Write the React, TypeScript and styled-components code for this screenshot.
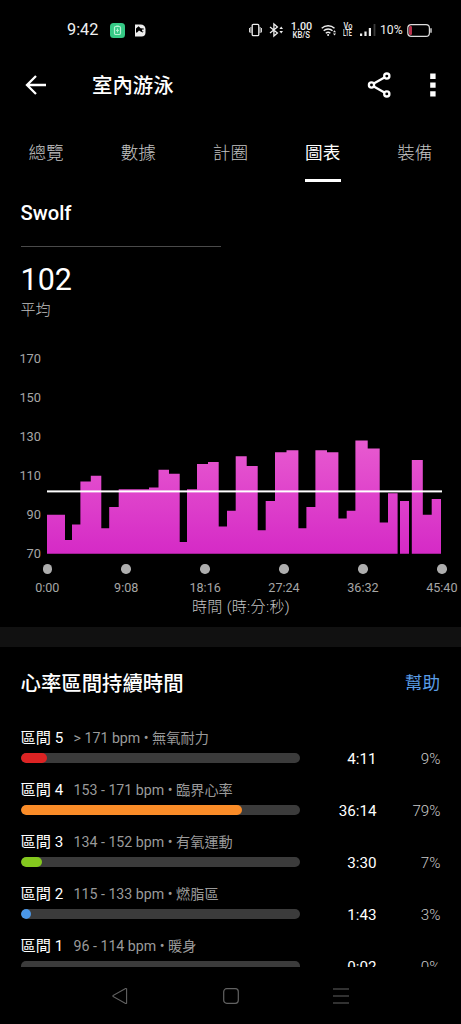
import React from 'react';
import styled, { createGlobalStyle } from 'styled-components';

const GlobalStyle = createGlobalStyle`
  *, *::before, *::after { box-sizing: border-box; }
  body {
    margin: 0;
    background: #000;
    color: #fff;
    font-family: Roboto, "Noto Sans CJK TC", sans-serif;
  }
`;

const Screen = styled.div`
  width: 461px;
  height: 1024px;
  display: flex;
  flex-direction: column;
  background: #000;
  overflow: hidden;
`;

const StatusBar = styled.header`
  flex: none;
  height: 60px;
  padding: 0 29px 0 67px;
  display: flex;
  align-items: center;
  justify-content: space-between;
`;

const StatusGroup = styled.div`
  display: flex;
  align-items: center;
`;

const StatusIcon = styled.svg<{ $ml?: number }>`
  flex: none;
  display: block;
  overflow: visible;
  margin-left: ${p => p.$ml ?? 0}px;
`;

const Clock = styled.span`
  width: 32px;
  font-size: 16.3px;
  line-height: 20px;
  color: #f0f0f0;
  white-space: nowrap;
`;

const Stacked = styled.span<{ $w: number; $ml: number }>`
  width: ${p => p.$w}px;
  margin-left: ${p => p.$ml}px;
  display: flex;
  flex-direction: column;
  align-items: center;
  font-weight: 500;
  white-space: nowrap;
  color: #eee;
`;

const StackedLine = styled.span<{ $size: number; $h: number; $squeeze?: number }>`
  font-size: ${p => p.$size}px;
  line-height: ${p => p.$h}px;
  transform: scaleX(${p => p.$squeeze ?? 1});
`;

const BatteryText = styled.span`
  width: 23px;
  margin-left: 4px;
  font-size: 12.2px;
  line-height: 16px;
  color: #eee;
`;

const AppBar = styled.div`
  flex: none;
  height: 50px;
  padding: 0 23px 0 24px;
  display: flex;
  align-items: center;
`;

const AppTitle = styled.h1`
  flex: 1;
  margin: 2px 0 0 44px;
  font-size: 20.4px;
  line-height: 28px;
  font-weight: 500;
`;

const IconButton = styled.button`
  flex: none;
  padding: 0;
  border: 0;
  background: none;
  color: #fff;
  display: flex;
`;

const Tabs = styled.nav`
  flex: none;
  height: 72px;
  display: grid;
  grid-template-columns: repeat(5, 92.2px);
`;

const Tab = styled.a<{ $active?: boolean }>`
  display: flex;
  flex-direction: column;
  align-items: center;
  justify-content: space-between;
  padding-top: 31px;
  font-size: 17.6px;
  line-height: 24px;
  font-weight: ${p => (p.$active ? 400 : 300)};
  color: ${p => (p.$active ? '#fff' : '#c4c4c4')};

  &::after {
    content: '';
    width: 36px;
    height: 3px;
    background: ${p => (p.$active ? '#fff' : 'transparent')};
  }
`;

const ChartSection = styled.section`
  flex: none;
  height: 445px;
  padding: 18px 0 0 20.5px;
`;

const ChartTitle = styled.h2`
  margin: 0;
  font-size: 20.2px;
  line-height: 26px;
  font-weight: 500;
`;

const Rule = styled.hr`
  width: 200px;
  height: 1px;
  margin: 20px 0 0;
  border: 0;
  background: #4a4a4a;
`;

const BigNumber = styled.div`
  margin-top: 15px;
  font-size: 30.5px;
  line-height: 36px;
`;

const Caption = styled.div`
  font-size: 15px;
  line-height: 22px;
  margin-top: 1px;
  font-weight: 300;
  color: #c0c0c0;
`;

const Plot = styled.div`
  margin-top: 18px;
  display: grid;
  grid-template-columns: 20.5px 395px;
  column-gap: 6.3px;
`;

const YAxis = styled.div`
  display: flex;
  flex-direction: column;
  align-items: flex-end;
  font-size: 12.8px;
  line-height: 39px;
  color: #a6a6a6;
`;

const Bars = styled.svg`
  display: block;
  width: 395px;
  height: 234px;
`;

const XAxis = styled.div`
  width: 394.6px;
  margin: -9px 0 0 26.8px;
  display: flex;
  justify-content: space-between;
`;

const XTick = styled.div`
  width: 0;
  display: flex;
  flex-direction: column;
  align-items: center;
  white-space: nowrap;
  font-size: 12.6px;
  line-height: 16px;
  color: #a6a6a6;

  &::before {
    content: '';
    width: 9.5px;
    height: 9.5px;
    margin-bottom: 6.5px;
    border-radius: 50%;
    background: #aeaeae;
  }
`;

const AxisTitle = styled.div`
  width: 441px;
  text-align: center;
  font-size: 15px;
  line-height: 22px;
  letter-spacing: 0.35px;
  font-weight: 300;
  color: #c4c4c4;
`;

const Separator = styled.div`
  flex: none;
  height: 20px;
  background: #111;
`;

const ZoneSection = styled.section`
  flex: none;
  height: 320px;
  padding: 22px 20.5px 0;
  overflow: hidden;
`;

const ZoneHeader = styled.div`
  height: 28px;
  margin-bottom: 30px;
  display: flex;
  align-items: center;
  justify-content: space-between;

  h2 {
    margin: 1px 0 0;
    font-size: 20.4px;
    line-height: 28px;
    font-weight: 500;
  }

  a {
    margin-right: 0.5px;
    font-size: 17.6px;
    line-height: 28px;
    color: #5b9de6;
  }
`;

const ZoneRow = styled.div`
  height: 52px;
  display: grid;
  grid-template-columns: 279px 77px 64px;
  grid-template-rows: 22px 18px;
  align-items: center;
`;

const ZoneLabel = styled.div`
  grid-column: 1 / -1;
  display: flex;
  align-items: baseline;
  gap: 10px;
  white-space: nowrap;
  line-height: 22px;

  strong {
    width: 43px;
    font-size: 15.2px;
    font-weight: 400;
  }

  span {
    font-size: 14.2px;
    color: #9a9a9a;
  }
`;

const Track = styled.div`
  height: 10px;
  border-radius: 5px;
  background: #3b3b3b;
  overflow: hidden;
`;

const Fill = styled.div<{ $w: number; $color: string }>`
  width: ${p => p.$w}px;
  height: 10px;
  border-radius: 5px;
  background: ${p => p.$color};
`;

const ZoneValue = styled.div<{ $muted?: boolean }>`
  text-align: right;
  font-size: 15.2px;
  line-height: 18px;
  padding-top: 1px;
  font-weight: ${p => (p.$muted ? 300 : 400)};
  color: ${p => (p.$muted ? '#cacaca' : '#fff')};
`;

const NavBar = styled.footer`
  flex: none;
  height: 57px;
  padding: 0 111px;
  display: flex;
  align-items: center;
  justify-content: space-between;
  color: #626262;
`;

// Each lap: start x, end x, swolf value
const laps: [number, number, number][] = [
  [0, 18, 90], [18, 25, 77], [25, 33.4, 85], [33.4, 43.8, 107], [43.8, 54.3, 110],
  [54.3, 62.2, 83], [62.2, 71.7, 94], [71.7, 102, 103], [102, 111.5, 104],
  [111.5, 122, 113], [122, 132.7, 111], [132.7, 140, 76], [140, 150, 103],
  [150, 161, 116], [161, 171.7, 117], [171.7, 180, 84], [180, 188.7, 92],
  [188.7, 199.7, 120], [199.7, 210.7, 115], [210.7, 218.7, 82], [218.7, 228, 97],
  [228, 239.5, 122], [239.5, 251.4, 123], [251.4, 259.4, 83], [259.4, 268.4, 94],
  [268.4, 280, 123], [280, 291.4, 122], [291.4, 299.7, 88], [299.7, 308.4, 92],
  [308.4, 320.7, 128], [320.7, 332.7, 124], [332.7, 341, 86], [341, 350.6, 101],
  [353, 362, 97], [364.8, 375.8, 118], [375.8, 384.7, 90], [384.7, 394, 98],
];

const yTicks = [170, 150, 130, 110, 90, 70];
const xTicks = ['0:00', '9:08', '18:16', '27:24', '36:32', '45:40'];
const BASE = 214.7;
const UNIT = 1.95;

// One outline for all laps, dropping to the baseline wherever there is a pause
const outline = laps
  .map(([x0, x1, v], i) => {
    const y = BASE - (v - 70) * UNIT;
    const opens = i === 0 || laps[i - 1][1] !== x0;
    const closes = i === laps.length - 1 || laps[i + 1][0] !== x1;
    return `${opens ? `M${x0} ${BASE}` : ''}L${x0} ${y}L${x1} ${y}${closes ? `L${x1} ${BASE}Z` : ''}`;
  })
  .join('');

const zones = [
  { name: '區間 5', range: '> 171 bpm • 無氧耐力', time: '4:11', pct: '9%', w: 26, color: '#dc2323' },
  { name: '區間 4', range: '153 - 171 bpm • 臨界心率', time: '36:14', pct: '79%', w: 221.5, color: '#fa8c28' },
  { name: '區間 3', range: '134 - 152 bpm • 有氧運動', time: '3:30', pct: '7%', w: 21.5, color: '#84c81e' },
  { name: '區間 2', range: '115 - 133 bpm • 燃脂區', time: '1:43', pct: '3%', w: 10.5, color: '#4a97e8' },
  { name: '區間 1', range: '96 - 114 bpm • 暖身', time: '0:02', pct: '0%', w: 0, color: '#888' },
];

export default function App() {
  return (
    <Screen>
      <GlobalStyle />
      <StatusBar>
        <StatusGroup>
          <Clock>9:42</Clock>
          <StatusIcon $ml={11} width="15" height="15" viewBox="0 0 15 15">
            <rect width="15" height="15" rx="3.5" fill="#35c985" />
            <rect x="4.5" y="3.5" width="6" height="8" rx="1.2" fill="none" stroke="#b5f2d3" strokeWidth="1.2" />
            <path d="M6.2 3h2.6M7.5 5.4v4M6 7.4h3" stroke="#b5f2d3" strokeWidth="1" />
          </StatusIcon>
          <StatusIcon $ml={10} width="10.5" height="13" viewBox="0 0 10.5 13">
            <path d="M0 .5h5.5A5 5 0 0 1 10.5 5v3.5a4 4 0 0 1-4 4H0z" fill="#eee" />
            <path d="M1 4.6L3.6 2.2 5.6 4.2 8.8 4.4V5.6L7.2 5.4 7 7.2 8.6 7.4 7.6 8.6 5.6 7.4 4 6.4 2.4 8.2 1 8.8z" fill="#000" />
          </StatusIcon>
        </StatusGroup>
        <StatusGroup>
          <StatusIcon width="13" height="14" viewBox="0 0 13 14" fill="none" stroke="#eee" strokeWidth="1.3">
            <rect x="3.2" y="1.4" width="6.6" height="11.2" rx="1.2" />
            <path d="M.5 5v4.4M1.9 4v6M11.1 4v6M12.5 5v4.4" strokeWidth=".9" />
          </StatusIcon>
          <StatusIcon $ml={7} width="15" height="14" viewBox="0 0 15 14" fill="none" stroke="#eee" strokeWidth="1.3">
            <path d="M1 4l7.4 6-3.5 3V1l3.5 3L1 10" />
            <path d="M10.4 6L12.2 3.6 14 6zM10.4 8l1.8 2.4L14 8z" fill="#eee" stroke="none" />
          </StatusIcon>
          <Stacked $w={21} $ml={7}>
            <StackedLine $size={10.8} $h={9}>1.00</StackedLine>
            <StackedLine $size={8.2} $h={8} $squeeze={0.95}>KB/S</StackedLine>
          </Stacked>
          <StatusIcon $ml={9} width="16" height="12" viewBox="0 0 16 12" fill="none" stroke="#eee" strokeWidth="1.4">
            <path d="M.7 4.2a9.4 9.4 0 0 1 12.8 0M2.7 6.7a6.4 6.4 0 0 1 8.8 0M4.8 9.2a3.4 3.4 0 0 1 4.6 0" />
            <circle cx="7.1" cy="10.9" r="1" fill="#eee" stroke="none" />
            <path d="M12 8.2l1.5-2 1.5 2zM12 9.6l1.5 2 1.5-2z" fill="#eee" stroke="none" />
          </StatusIcon>
          <Stacked $w={10} $ml={6}>
            <StackedLine $size={8.4} $h={7} $squeeze={0.88}>Vo</StackedLine>
            <StackedLine $size={8.2} $h={7} $squeeze={0.68}>LTE</StackedLine>
          </Stacked>
          <StatusIcon $ml={7} width="16" height="12" viewBox="0 0 16 12" fill="#eee">
            <path d="M0 9.4h2.2V12H0zM4.4 7.4h2.2V12H4.4zM8.8 4h2.2v8H8.8z" />
            <path d="M13.6 0h1.8v12h-1.8z" fill="#3a3a3a" />
          </StatusIcon>
          <BatteryText>10%</BatteryText>
          <StatusIcon $ml={4} width="25" height="13" viewBox="0 0 25 13" fill="none">
            <rect x=".8" y=".7" width="21.6" height="11.6" rx="3.4" stroke="#ddd" strokeWidth="1.2" />
            <rect x="2" y="2" width="3" height="9" rx="1.2" fill="#b8304a" />
            <path d="M24 4.2v4.6" stroke="#ddd" strokeWidth="1.4" />
          </StatusIcon>
        </StatusGroup>
      </StatusBar>

      <AppBar>
        <IconButton aria-label="返回">
          <svg width="24" height="24" viewBox="0 0 24 24" fill="none" stroke="currentColor" strokeWidth="2.3">
            <path d="M22 12H3.5M12 3L3 12l9 9" />
          </svg>
        </IconButton>
        <AppTitle>室內游泳</AppTitle>
        <IconButton aria-label="分享">
          <svg width="25" height="28" viewBox="0 0 25 28" fill="none" stroke="currentColor" strokeWidth="2.3">
            <circle cx="4.5" cy="14" r="2.6" />
            <circle cx="19.8" cy="5.1" r="2.6" />
            <circle cx="19.8" cy="22.9" r="2.6" />
            <path d="M6.8 12.6l10.6-6.1M6.8 15.4l10.6 6.1" />
          </svg>
        </IconButton>
        <IconButton aria-label="更多">
          <svg width="46" height="28" viewBox="0 0 46 28" fill="currentColor">
            <path d="M38.2 2.6h5.4v5.4h-5.4zM38.2 11.4h5.4v5.4h-5.4zM38.2 20.2h5.4v5.4h-5.4z" />
          </svg>
        </IconButton>
      </AppBar>

      <Tabs>
        <Tab>總覽</Tab>
        <Tab>數據</Tab>
        <Tab>計圈</Tab>
        <Tab $active>圖表</Tab>
        <Tab>裝備</Tab>
      </Tabs>

      <ChartSection>
        <ChartTitle>Swolf</ChartTitle>
        <Rule />
        <BigNumber>102</BigNumber>
        <Caption>平均</Caption>
        <Plot>
          <YAxis>
            {yTicks.map(t => <span key={t}>{t}</span>)}
          </YAxis>
          <Bars viewBox="0 0 395 234">
            <defs>
              <linearGradient id="lap" gradientUnits="userSpaceOnUse" x1="0" y1="100" x2="0" y2={BASE}>
                <stop offset="0" stopColor="#e85bd0" />
                <stop offset="1" stopColor="#d52ac6" />
              </linearGradient>
            </defs>
            <path d={outline} fill="url(#lap)" />
            <rect x="0" y="151.4" width="395" height="2" fill="#fff" />
          </Bars>
        </Plot>
        <XAxis>
          {xTicks.map(t => <XTick key={t}>{t}</XTick>)}
        </XAxis>
        <AxisTitle>時間 (時:分:秒)</AxisTitle>
      </ChartSection>

      <Separator />

      <ZoneSection>
        <ZoneHeader>
          <h2>心率區間持續時間</h2>
          <a>幫助</a>
        </ZoneHeader>
        {zones.map(z => (
          <ZoneRow key={z.name}>
            <ZoneLabel>
              <strong>{z.name}</strong>
              <span>{z.range}</span>
            </ZoneLabel>
            <Track>
              <Fill $w={z.w} $color={z.color} />
            </Track>
            <ZoneValue>{z.time}</ZoneValue>
            <ZoneValue $muted>{z.pct}</ZoneValue>
          </ZoneRow>
        ))}
      </ZoneSection>

      <NavBar>
        <svg width="18" height="18" viewBox="0 0 18 18" fill="none" stroke="currentColor" strokeWidth="1.1">
          <path d="M15.6 1.8v14.4q-.4.5-1 .2L2 9.4V8.6L14.6 1.6q.6-.3 1 .2z" />
        </svg>
        <svg width="18" height="18" viewBox="0 0 18 18" fill="none" stroke="currentColor" strokeWidth="1.2">
          <rect x="1.7" y="1.7" width="14.6" height="14.6" rx="3" />
        </svg>
        <svg width="18" height="18" viewBox="0 0 18 18" fill="none" stroke="currentColor" strokeWidth="1.2">
          <path d="M1 2h16M1 9h16M1 16h16" />
        </svg>
      </NavBar>
    </Screen>
  );
}
